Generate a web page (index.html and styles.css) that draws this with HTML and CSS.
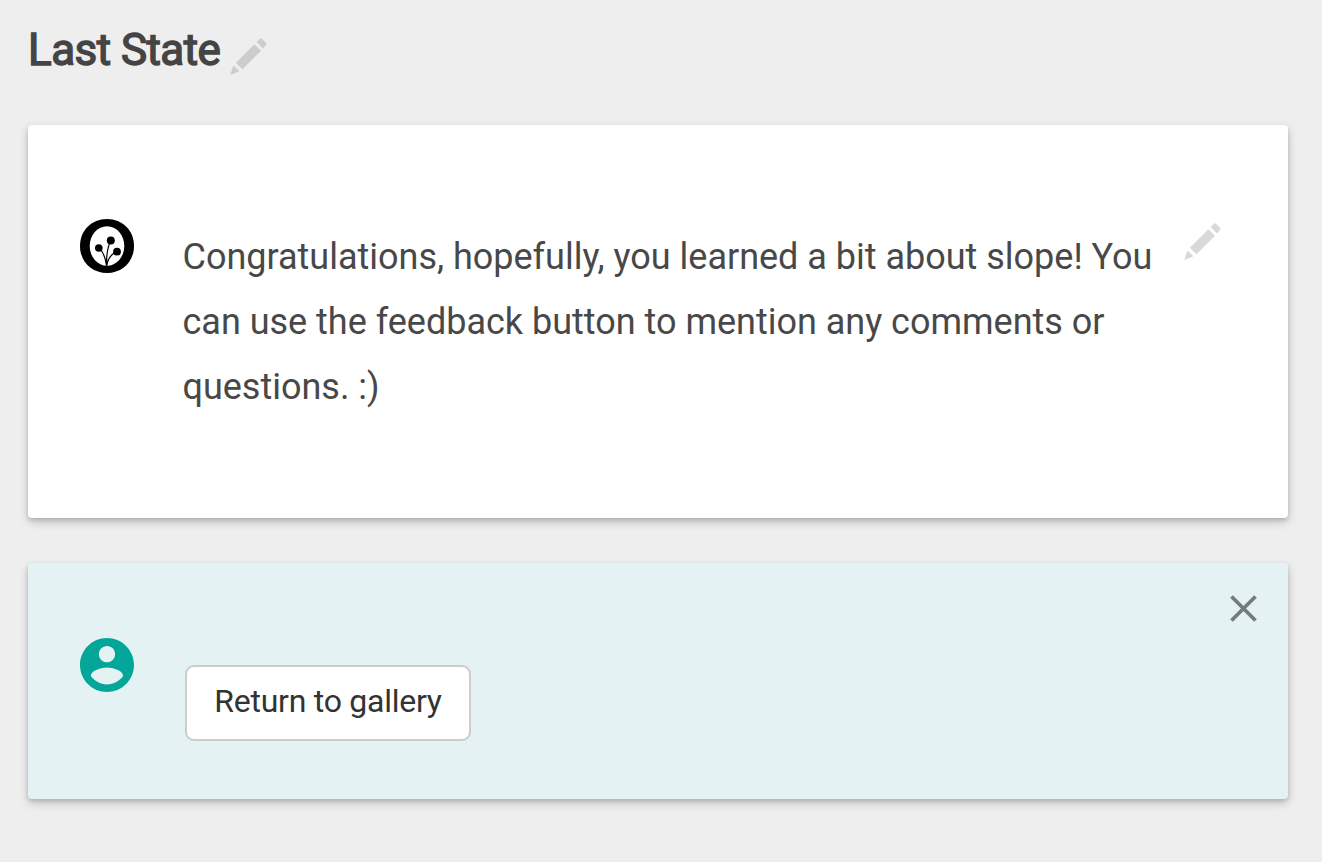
FILE: index.html
```html
<!DOCTYPE html>
<html lang="en">
<head>
<meta charset="utf-8">
<title>Last State</title>
<link rel="stylesheet" href="styles.css">
</head>
<body>
<header class="state-header">
  <h1 class="state-title">Last State</h1>
  <svg class="pencil" viewBox="0 0 38 38" aria-hidden="true"><path d="M4.400 28.500L10.400 34.200L1.300 37.900ZM6.900 25.700L25.400 7.200L32 13.700L13.500 32.200ZM27.600 5L31.100 1.700Q32 1 32.900 1.700L37.200 6Q37.900 6.900 37.200 7.800L34.100 11.400Z"/></svg>
</header>
<main>
  <section class="card content-card">
    <svg class="avatar" viewBox="0 0 54 54" aria-hidden="true">
      <path d="M27 0C42.500 0 54 11.500 54 27S42.500 54 27 54S0 42.500 0 27S11.500 0 27 0Z"/>
      <ellipse cx="27" cy="27" rx="17.3" ry="19.7" fill="#fff"/>
      <path d="M18.8 29Q25 34 26.6 47Q26 31 31 21M26.7 47Q28 37 36 33" fill="none" stroke="#000" stroke-width="1.2"/>
      <circle cx="18.8" cy="29" r="3.8"/><circle cx="30.8" cy="21.4" r="4"/><circle cx="37" cy="32.7" r="3.9"/>
    </svg>
    <p class="message">Congratulations, hopefully, you learned a bit about slope! You can use the feedback button to mention any comments or questions. :)</p>
    <svg class="pencil card-pencil" viewBox="0 0 38 38" aria-hidden="true"><path d="M4.400 28.500L10.400 34.200L1.300 37.900ZM6.900 25.700L25.400 7.200L32 13.700L13.500 32.200ZM27.600 5L31.100 1.700Q32 1 32.900 1.700L37.200 6Q37.900 6.900 37.200 7.800L34.100 11.400Z"/></svg>
  </section>
  <section class="card answer-card">
    <svg class="avatar learner" viewBox="2 2 20 20" aria-hidden="true"><path d="M12 2C6.48 2 2 6.48 2 12s4.48 10 10 10 10-4.48 10-10S17.52 2 12 2zm0 3c1.66 0 3 1.34 3 3s-1.34 3-3 3-3-1.34-3-3 1.34-3 3-3zm0 14.2c-2.5 0-4.71-1.28-6-3.22.03-1.99 4-3.08 6-3.08 1.99 0 5.97 1.09 6 3.08-1.29 1.94-3.5 3.22-6 3.22z"/></svg>
    <button class="gallery-button">Return to gallery</button>
    <svg class="close" viewBox="0 0 28 28" aria-label="Close"><path d="M1.5 1.500L25.500 25.500M25.500 1.500L1.500 25.500"/></svg>
  </section>
</main>
</body>
</html>
```

FILE: styles.css
```css
* { box-sizing: border-box; }
body { margin: 0; min-height: 862px; padding: 0 34px 0 28px; background: #eee; color: #444; font-family: Roboto, sans-serif; }
.state-header { display: flex; height: 125px; padding-top: 24px; }
.state-title { margin: 0; font-size: 44px; line-height: 52px; font-weight: 400; letter-spacing: -.55px; -webkit-text-stroke: 1.4px #444; white-space: nowrap; }
.pencil { width: 38px; height: 38px; margin: 13px 0 0 9px; fill: #ccc; flex: none; }
.card { display: flex; align-items: flex-start; border-radius: 4px; box-shadow: 0 4px 10px rgba(0,0,0,.2), 0 2px 4px rgba(0,0,0,.12); }
.content-card { height: 393px; padding: 94px 66px 0 52px; background: #fff; }
.avatar { width: 54px; height: 54px; flex: none; }
.message { width: 978px; margin: 6px 0 0 48.5px; color: #484848; font-size: 36px; line-height: 65px; letter-spacing: -.01px; }
.card-pencil { margin: 3px 0 0 22px; fill: #d9d9d9; }
.answer-card { height: 236px; margin-top: 45px; padding: 75px 30px 0 52px; background: #e4f2f3; }
.learner { fill: #05a69a; }
.gallery-button { width: 286px; height: 76px; margin: 27px 0 0 51px; padding: 0 0 4px; border: 2px solid #ccc; border-radius: 9px; background: #fff; color: #333; font: 400 32px/40px Roboto, sans-serif; letter-spacing: -.25px; white-space: nowrap; }
.close { width: 28px; height: 28px; margin: -43px 0 0 auto; fill: none; stroke: #757b7c; stroke-width: 3.7; }
```
